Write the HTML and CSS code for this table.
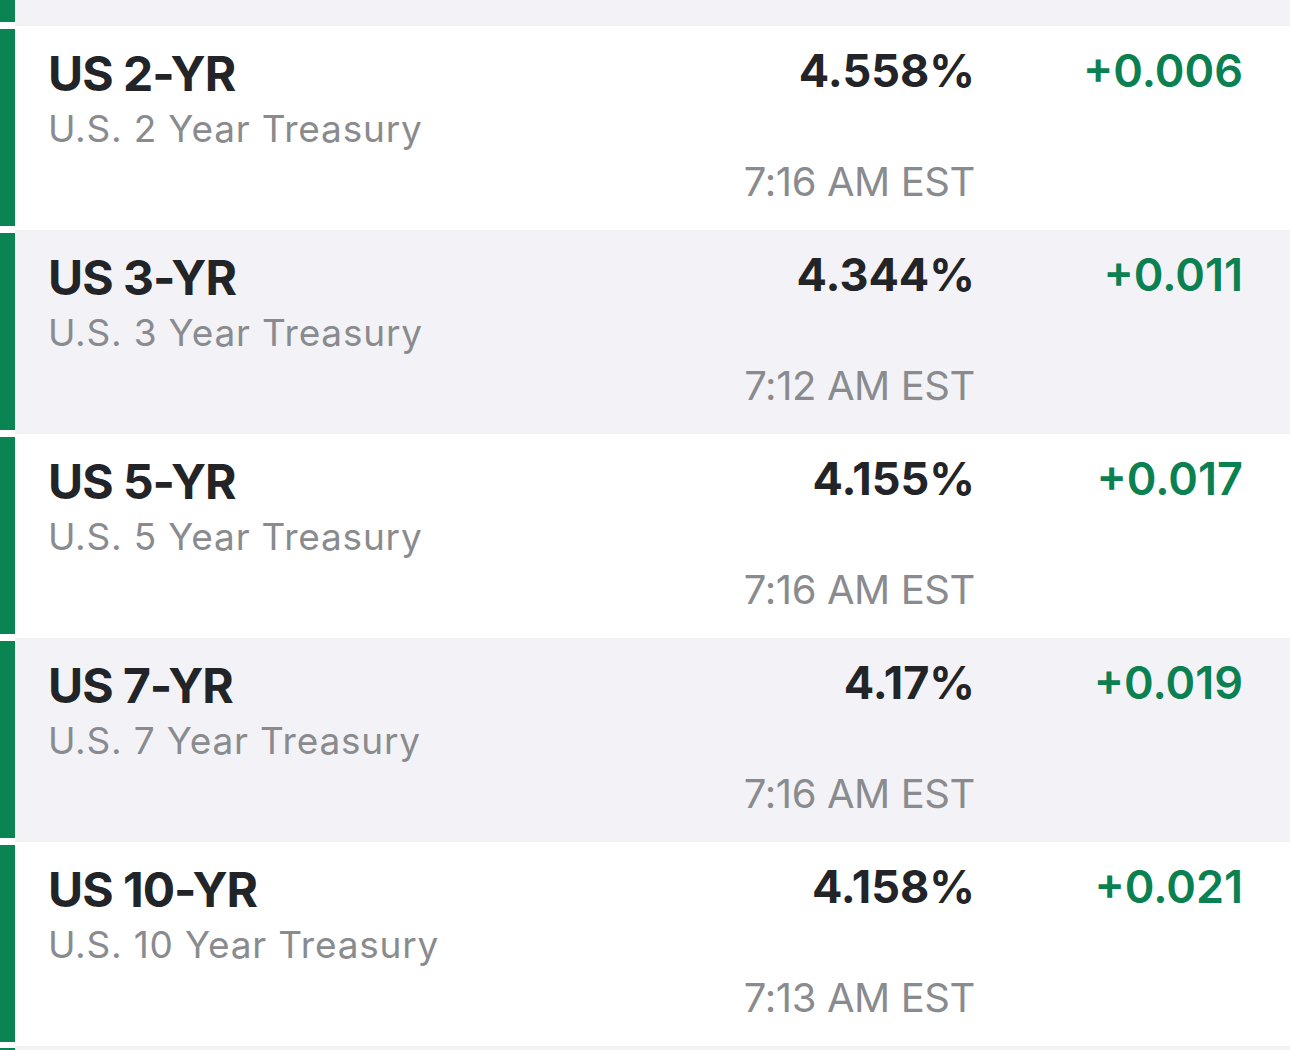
FILE: index.html
```html
<!DOCTYPE html>
<html>
<head>
<meta charset="utf-8">
<link rel="stylesheet" href="styles.css">
</head>
<body>
<div class="list">
  <div class="row alt partial">
    <div class="strip"><div class="bar"></div></div>
    <div class="content"></div>
  </div>
  <div class="row">
    <div class="strip"><div class="bar"></div></div>
    <div class="content">
      <div class="name"><div class="sym">US 2-YR</div><div class="desc">U.S. 2 Year Treasury</div></div>
      <div class="quote"><div class="val">4.558%</div><div class="time">7:16 AM EST</div></div>
      <div class="chg">+0.006</div>
    </div>
  </div>
  <div class="row alt">
    <div class="strip"><div class="bar"></div></div>
    <div class="content">
      <div class="name"><div class="sym">US 3-YR</div><div class="desc">U.S. 3 Year Treasury</div></div>
      <div class="quote"><div class="val">4.344%</div><div class="time">7:12 AM EST</div></div>
      <div class="chg">+0.011</div>
    </div>
  </div>
  <div class="row">
    <div class="strip"><div class="bar"></div></div>
    <div class="content">
      <div class="name"><div class="sym">US 5-YR</div><div class="desc">U.S. 5 Year Treasury</div></div>
      <div class="quote"><div class="val">4.155%</div><div class="time">7:16 AM EST</div></div>
      <div class="chg">+0.017</div>
    </div>
  </div>
  <div class="row alt">
    <div class="strip"><div class="bar"></div></div>
    <div class="content">
      <div class="name"><div class="sym">US 7-YR</div><div class="desc">U.S. 7 Year Treasury</div></div>
      <div class="quote"><div class="val">4.17%</div><div class="time">7:16 AM EST</div></div>
      <div class="chg">+0.019</div>
    </div>
  </div>
  <div class="row">
    <div class="strip"><div class="bar"></div></div>
    <div class="content">
      <div class="name"><div class="sym">US 10-YR</div><div class="desc">U.S. 10 Year Treasury</div></div>
      <div class="quote"><div class="val">4.158%</div><div class="time">7:13 AM EST</div></div>
      <div class="chg">+0.021</div>
    </div>
  </div>
  <div class="row alt tail">
    <div class="strip"><div class="bar"></div></div>
    <div class="content"></div>
  </div>
</div>
</body>
</html>
```

FILE: styles.css
```css
html, body {
  margin: 0;
  padding: 0;
  background: #ffffff;
  overflow: hidden;
}
body {
  font-family: Inter, "Liberation Sans", sans-serif;
  width: 1290px;
  height: 1050px;
}
.list {
  display: flex;
  flex-direction: column;
}
.row {
  display: flex;
  height: 204px;
  flex-shrink: 0;
}
.row.partial {
  height: 26px;
}
.row.tail {
  height: 4px;
}
.strip {
  width: 15px;
  background: #ffffff;
  padding: 3px 0 4px;
  box-sizing: border-box;
  display: flex;
}
.row.partial .strip {
  padding-top: 0;
}
.row.tail .strip {
  padding: 2px 0 0;
}
.bar {
  flex: 1;
  background: #0a8453;
}
.content {
  flex: 1;
  background: #ffffff;
  display: grid;
  grid-template-columns: 1fr auto 268px;
  align-items: start;
  padding: 21px 47px 0 33px;
}
.row.partial .content,
.row.tail .content {
  padding: 0;
}
.row.alt .content {
  background: #f3f3f7;
}
.sym {
  margin-top: 3px;
  font-size: 48px;
  line-height: 1;
  font-weight: 700;
  letter-spacing: -1px;
  color: #222427;
}
.desc {
  margin-top: 12px;
  font-size: 37px;
  line-height: 1;
  letter-spacing: 0.8px;
  color: #898b8e;
}
.quote {
  display: flex;
  flex-direction: column;
  align-items: flex-end;
}
.val {
  margin-top: 1px;
  font-size: 45px;
  line-height: 1;
  font-weight: 700;
  color: #222427;
}
.time {
  margin-top: 69px;
  font-size: 40px;
  line-height: 1;
  letter-spacing: -0.4px;
  color: #898b8e;
}
.chg {
  margin-top: 1px;
  text-align: right;
  font-size: 45px;
  line-height: 1;
  font-weight: 600;
  color: #0b8050;
}
```
